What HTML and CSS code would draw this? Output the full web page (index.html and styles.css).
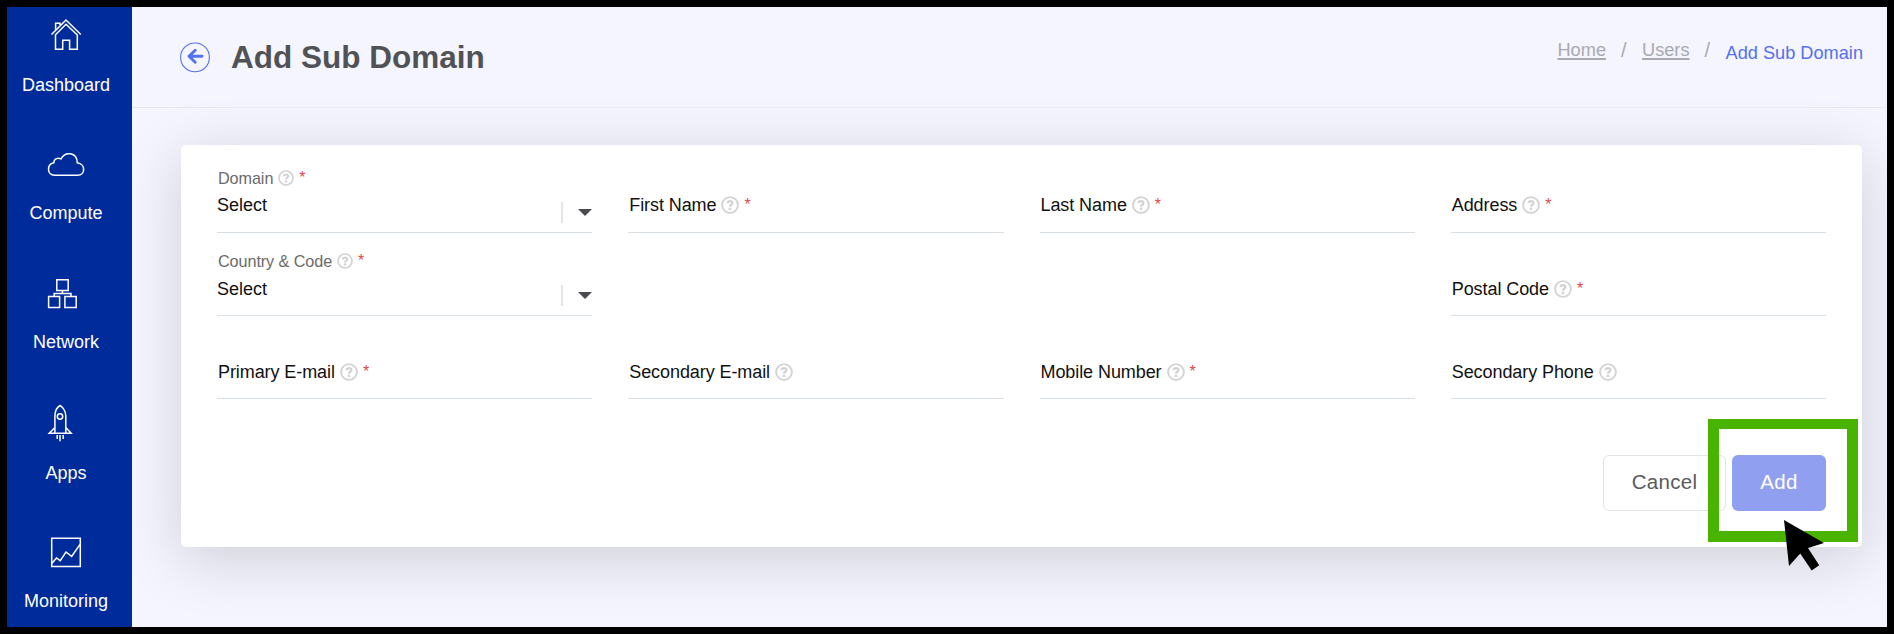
FILE: index.html
```html
<!DOCTYPE html>
<html lang="en">
<head>
<meta charset="utf-8">
<title>Add Sub Domain</title>
<link rel="stylesheet" href="styles.css">
</head>
<body>
<svg width="0" height="0" class="defs">
  <symbol id="help" viewBox="0 0 18 18">
    <circle cx="9" cy="9" r="7.9" fill="none" stroke="currentColor" stroke-width="1.9"/>
    <path d="M6.5 7.2C6.8 4.4 11.6 4.5 11.4 7.1C11.3 8.8 9.1 8.7 9 10.6" fill="none" stroke="currentColor" stroke-width="2.3"/>
    <circle cx="9" cy="12.9" r="1.4" fill="currentColor"/>
  </symbol>
</svg>
<div class="app">
  <nav class="sidebar">
    <a class="nav nav-dashboard"><svg viewBox="39 14 61 60"><path d="M51.5 34.5L66 20L80.8 34.5M55.5 49.2V34.8L66 24.3L77.3 35V49.2H69.6V40.3H62.7V49.2ZM55.6 29.5V23.2H60V25"/></svg><span>Dashboard</span></a>
    <a class="nav nav-compute"><svg viewBox="39 142 61 60"><path d="M54.5 175.2C46.8 175.2 46.5 164.5 53.8 162.8C54 158.5 58.3 157.2 61 159C65 151 77 152 77.2 162.8C86 164 85.5 175.2 77.5 175.2Z"/></svg><span>Compute</span></a>
    <a class="nav nav-network"><svg viewBox="39 271 61 60"><path d="M56.8 279.7H68.2V290.5H56.8ZM48.6 296.6H59.6V307.5H48.6ZM64.9 296.6H76.2V307.5H64.9ZM62.4 290.5V293.3M54.2 296.5V293.5H71V296.5"/></svg><span>Network</span></a>
    <a class="nav nav-apps"><svg viewBox="39 402 61 60"><path d="M54.9 433.2V416C54.9 411 57.5 407 60 405.5C62.5 407 65.8 411 65.8 416V433.2M54.9 427.5L49.2 433.3H71.2L65.8 427.5M57.2 435V439M60 435V441.2M63.2 435V439"/><circle cx="60" cy="416.5" r="2.7"/></svg><span>Apps</span></a>
    <a class="nav nav-monitoring"><svg viewBox="39 530 61 60"><path d="M51.7 538.2H80.3V566.4H51.7ZM52 563.2L56.5 558L60.2 560.6L66 552L71.7 556.4L80 544.3"/></svg><span>Monitoring</span></a>
  </nav>
  <main class="main">
    <header class="header">
      <div class="heading">
        <svg class="back" viewBox="180 41 30 31"><circle cx="195" cy="56.4" r="14.4" stroke-width="1.1"/><path d="M202 55.2H189M195.2 49.3L189 55.3L195.2 61.3" stroke-width="2.9" stroke-linecap="round" stroke-linejoin="round"/></svg>
        <h1>Add Sub Domain</h1>
      </div>
      <div class="crumbs">
        <a>Home</a><span class="sep">/</span><a>Users</a><span class="sep">/</span><span class="current">Add Sub Domain</span>
      </div>
    </header>
    <section class="card">
      <div class="grid">
        <div class="field">
          <div class="label small"><span>Domain</span><svg><use href="#help"/></svg><i>*</i></div>
          <div class="select"><span>Select</span><b class="caret"></b></div>
        </div>
        <div class="field"><div class="label"><span>First Name</span><svg><use href="#help"/></svg><i>*</i></div></div>
        <div class="field"><div class="label"><span>Last Name</span><svg><use href="#help"/></svg><i>*</i></div></div>
        <div class="field"><div class="label"><span>Address</span><svg><use href="#help"/></svg><i>*</i></div></div>
        <div class="field lower">
          <div class="label small"><span>Country &amp; Code</span><svg><use href="#help"/></svg><i>*</i></div>
          <div class="select"><span>Select</span><b class="caret"></b></div>
        </div>
        <div class="field lower last"><div class="label"><span>Postal Code</span><svg><use href="#help"/></svg><i>*</i></div></div>
        <div class="field lower"><div class="label"><span>Primary E-mail</span><svg><use href="#help"/></svg><i>*</i></div></div>
        <div class="field lower"><div class="label"><span>Secondary E-mail</span><svg><use href="#help"/></svg></div></div>
        <div class="field lower"><div class="label"><span>Mobile Number</span><svg><use href="#help"/></svg><i>*</i></div></div>
        <div class="field lower"><div class="label"><span>Secondary Phone</span><svg><use href="#help"/></svg></div></div>
      </div>
      <div class="actions">
        <button class="btn cancel">Cancel</button>
        <button class="btn add">Add</button>
      </div>
    </section>
  </main>
  <div class="highlight"></div>
  <svg class="cursor" viewBox="0 0 42 52"><path d="M0 0L40 23L24 28L35.2 45.3L27.7 50.4L16.2 33.5L5 46Z"/></svg>
</div>
</body>
</html>
```

FILE: styles.css
```css
* { box-sizing: border-box; }
body { margin: 0; font-family: "Liberation Sans", Arial, sans-serif; }
.defs { position: absolute; }
.app {
  position: relative;
  display: flex;
  width: 1894px;
  height: 634px;
  border: 7px solid #000;
  background: #f4f5ff;
  overflow: hidden;
}

/* Sidebar */
.sidebar { width: 125px; flex: none; background: #002b9b; color: #fff; position: relative; z-index: 1; }
.nav { display: flex; flex-direction: column; justify-content: flex-end; align-items: center; height: 128px; padding-right: 7px; font-size: 18px; line-height: 22px; }
.nav-dashboard { height: 89px; }
.nav-network { height: 129px; }
.nav-apps { height: 131px; }
.nav svg { width: 61px; height: 60px; margin-left: 7px; flex: none; fill: none; stroke: #fff; stroke-width: 1.5; }

/* Header */
.main { flex: 1; display: flex; flex-direction: column; }
.header {
  position: relative;
  z-index: 1;
  height: 101px;
  display: flex;
  justify-content: space-between;
  align-items: flex-start;
  padding: 0 24px 0 48px;
  border-bottom: 1px solid #e6e8ee;
}
.heading { display: flex; align-items: center; gap: 21px; padding-top: 30px; height: 70px; }
.back { width: 30px; height: 31px; fill: none; stroke: #5570f0; }
h1 { margin: 0; font-size: 31.5px; line-height: 40px; color: #515255; white-space: nowrap; }
.crumbs { display: flex; padding-top: 32px; font-size: 18.2px; line-height: 22px; color: #a9aaae; }
.crumbs a { text-decoration: underline; text-decoration-thickness: 2px; text-underline-offset: 2px; }
.sep { width: 36px; padding-left: 15px; font-size: 20px; }
.crumbs .current { color: #5570f0; padding-top: 3px; }

/* Form card */
.card {
  margin: 37px 25px 0 49px;
  height: 402px;
  padding: 4px 36px 36px;
  border-radius: 5px;
  background: #fff;
  box-shadow: 0 12px 60px rgba(20, 20, 0, .17);
  display: flex;
  flex-direction: column;
  justify-content: space-between;
}
.grid { display: grid; grid-template-columns: repeat(4, 1fr); grid-auto-rows: 83px; column-gap: 36px; margin-top: 1px; }
.field { border-bottom: 1px solid #d8e0e6; display: flex; flex-direction: column; justify-content: flex-end; }
.last { grid-column: 4; }
.label { display: flex; align-items: center; height: 22px; margin-bottom: 16px; padding-left: 1px; font-size: 18px; letter-spacing: -.08px; line-height: 22px; color: #111; white-space: nowrap; }
.label svg { width: 18px; height: 18px; margin-left: 5px; color: #d3d3d3; }
.label i { font-style: normal; font-size: 16px; color: #e04848; margin-left: 5px; }
.lower .label { margin-bottom: 15px; }
.field .label.small { font-size: 16.2px; margin-bottom: 5px; color: #6b6b6b; }
.label.small svg { width: 16px; height: 16px; }
.select { display: flex; justify-content: space-between; height: 38px; font-size: 18px; line-height: 22px; color: #111; }
.lower .select span { padding-top: 1px; }
.caret { width: 31px; height: 21px; margin-top: 8px; border-left: 2px solid #e4e5e7; display: flex; align-items: center; justify-content: flex-end; }
.caret::after { content: ""; border: 7.5px solid transparent; border-top: 7px solid #494b50; border-bottom: 0; }

/* Buttons */
.actions { display: flex; justify-content: flex-end; gap: 6px; }
.btn { height: 56px; border-radius: 6px; font: 20.5px/24px "Liberation Sans", Arial, sans-serif; letter-spacing: .3px; padding: 0 0 2px; }
.cancel { width: 123px; border: 1px solid #e2e4e6; background: #fff; color: #58595d; }
.add { width: 94px; border: 0; background: #919ff0; color: #fff; }

/* Walkthrough overlay */
.highlight { position: absolute; z-index: 2; left: 1701px; top: 412px; width: 150px; height: 123px; border: 11px solid #49b400; border-top-width: 10px; }
.cursor { position: absolute; z-index: 3; left: 1777px; top: 513px; width: 42px; height: 52px; }
```
